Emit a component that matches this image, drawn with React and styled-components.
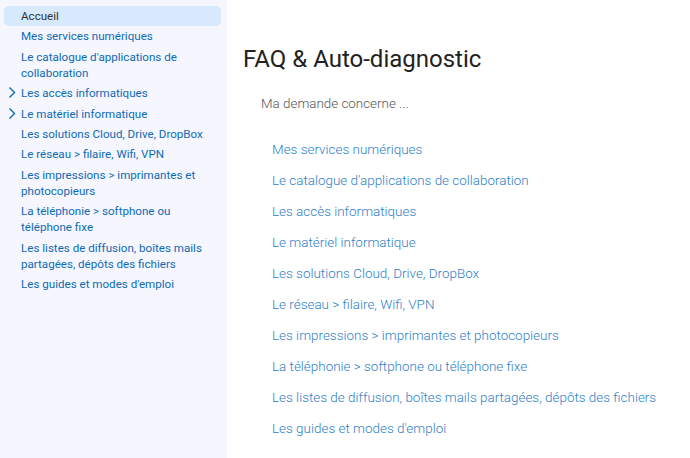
import styled, { createGlobalStyle } from "styled-components";

const GlobalStyle = createGlobalStyle`
  html, body {
    margin: 0;
    padding: 0;
    background: #ffffff;
    font-family: Roboto, "Noto Sans", sans-serif;
  }
`;

const Page = styled.div`
  display: flex;
  width: 690px;
  height: 458px;
  overflow: hidden;
`;

const Sidebar = styled.nav`
  width: 227px;
  flex-shrink: 0;
  background-color: #f5f6fe;
  padding: 6px 6px 0 4px;
  box-sizing: border-box;
  display: flex;
  flex-direction: column;
  gap: 0.4px;
`;

const NavItem = styled.a`
  display: flex;
  align-items: flex-start;
  padding: 2px 8px 2px 17px;
  border-radius: 5px;
  font-size: 11.6px;
  line-height: 16px;
  text-decoration: none;
  color: ${(p) => (p.$active ? "#333333" : "#0d6bb5")};
  background-color: ${(p) => (p.$active ? "#d6e9fd" : "transparent")};
  position: relative;
`;

const Chevron = styled.svg`
  position: absolute;
  left: 3px;
  top: 3px;
  width: 10px;
  height: 13px;
`;

const Main = styled.main`
  flex: 1;
  padding: 44px 0 0 16px;
`;

const Title = styled.h1`
  margin: 0;
  font-size: 24px;
  font-weight: 400;
  line-height: 30px;
  color: #222222;
`;

const Intro = styled.p`
  margin: 21px 0 0 18px;
  font-size: 13.4px;
  font-weight: 300;
  line-height: 18px;
  color: #555555;
`;

const LinkList = styled.ul`
  list-style: none;
  margin: 28px 0 0 29px;
  padding: 0;
  display: flex;
  flex-direction: column;
  gap: 13px;
`;

const LinkItem = styled.li`
  font-size: 13.45px;
  font-weight: 300;
  line-height: 18px;
  color: #2f80c8;
`;

const navItems = [
  { label: "Accueil", active: true },
  { label: "Mes services numériques" },
  { label: "Le catalogue d'applications de collaboration" },
  { label: "Les accès informatiques", expandable: true },
  { label: "Le matériel informatique", expandable: true },
  { label: "Les solutions Cloud, Drive, DropBox" },
  { label: "Le réseau > filaire, Wifi, VPN" },
  { label: "Les impressions > imprimantes et photocopieurs" },
  { label: "La téléphonie > softphone ou téléphone fixe" },
  { label: "Les listes de diffusion, boîtes mails partagées, dépôts des fichiers" },
  { label: "Les guides et modes d'emploi" },
];

const links = [
  "Mes services numériques",
  "Le catalogue d'applications de collaboration",
  "Les accès informatiques",
  "Le matériel informatique",
  "Les solutions Cloud, Drive, DropBox",
  "Le réseau > filaire, Wifi, VPN",
  "Les impressions > imprimantes et photocopieurs",
  "La téléphonie > softphone ou téléphone fixe",
  "Les listes de diffusion, boîtes mails partagées, dépôts des fichiers",
  "Les guides et modes d'emploi",
];

const App = () => {
  return (
    <Page>
      <GlobalStyle />
      <Sidebar>
        {navItems.map((item) => (
          <NavItem key={item.label} href="#" $active={item.active}>
            {item.expandable && (
              <Chevron viewBox="0 0 10 13">
                <path d="M2.5 1.5 L7.5 6.5 L2.5 11.5" fill="none" stroke="#0d6bb5" strokeWidth="1.4" />
              </Chevron>
            )}
            {item.label}
          </NavItem>
        ))}
      </Sidebar>
      <Main>
        <Title>FAQ &amp; Auto-diagnostic</Title>
        <Intro>Ma demande concerne ...</Intro>
        <LinkList>
          {links.map((label) => (
            <LinkItem key={label}>{label}</LinkItem>
          ))}
        </LinkList>
      </Main>
    </Page>
  );
};

export default App;
